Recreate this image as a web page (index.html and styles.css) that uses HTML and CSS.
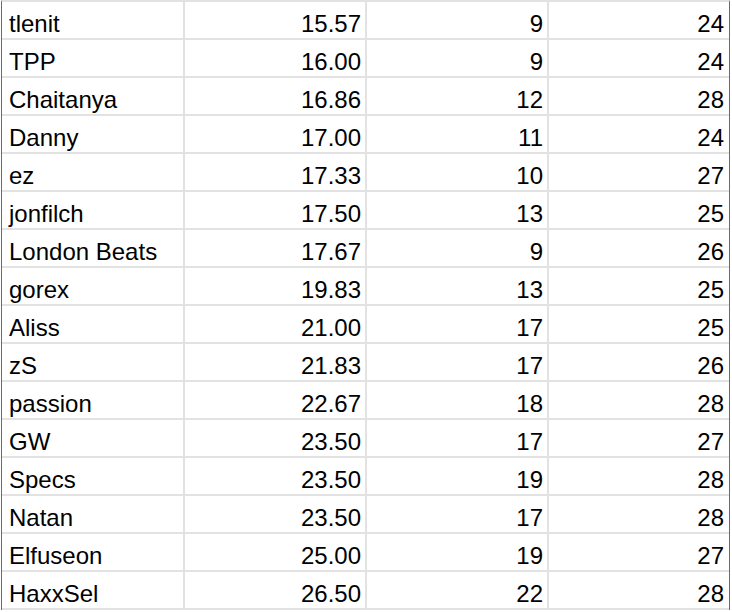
FILE: index.html
```html
<!DOCTYPE html>
<html>
<head>
<meta charset="utf-8">
<link rel="stylesheet" href="styles.css">
</head>
<body>
<div class="sheet">
  <div class="cell name">tlenit</div><div class="cell num">15.57</div><div class="cell num">9</div><div class="cell num last">24</div>
  <div class="cell name">TPP</div><div class="cell num">16.00</div><div class="cell num">9</div><div class="cell num last">24</div>
  <div class="cell name">Chaitanya</div><div class="cell num">16.86</div><div class="cell num">12</div><div class="cell num last">28</div>
  <div class="cell name">Danny</div><div class="cell num">17.00</div><div class="cell num">11</div><div class="cell num last">24</div>
  <div class="cell name">ez</div><div class="cell num">17.33</div><div class="cell num">10</div><div class="cell num last">27</div>
  <div class="cell name">jonfilch</div><div class="cell num">17.50</div><div class="cell num">13</div><div class="cell num last">25</div>
  <div class="cell name">London Beats</div><div class="cell num">17.67</div><div class="cell num">9</div><div class="cell num last">26</div>
  <div class="cell name">gorex</div><div class="cell num">19.83</div><div class="cell num">13</div><div class="cell num last">25</div>
  <div class="cell name">Aliss</div><div class="cell num">21.00</div><div class="cell num">17</div><div class="cell num last">25</div>
  <div class="cell name">zS</div><div class="cell num">21.83</div><div class="cell num">17</div><div class="cell num last">26</div>
  <div class="cell name">passion</div><div class="cell num">22.67</div><div class="cell num">18</div><div class="cell num last">28</div>
  <div class="cell name">GW</div><div class="cell num">23.50</div><div class="cell num">17</div><div class="cell num last">27</div>
  <div class="cell name">Specs</div><div class="cell num">23.50</div><div class="cell num">19</div><div class="cell num last">28</div>
  <div class="cell name">Natan</div><div class="cell num">23.50</div><div class="cell num">17</div><div class="cell num last">28</div>
  <div class="cell name">Elfuseon</div><div class="cell num">25.00</div><div class="cell num">19</div><div class="cell num last">27</div>
  <div class="cell name">HaxxSel</div><div class="cell num">26.50</div><div class="cell num">22</div><div class="cell num last">28</div>
</div>
</body>
</html>
```
FILE: styles.css
```css
html, body {
  margin: 0;
  padding: 0;
  background: #ffffff;
}

.sheet {
  margin-left: 1px;
  width: 727px;
  display: grid;
  grid-template-columns: 183px 182px 182px 180px;
  grid-auto-rows: 38px;
  border-left: 1px solid #3f8a43;
  border-right: 1px solid #3f8a43;
  border-top: 2px solid #e2e2e2;
  box-shadow: 0 1px 0 #3f8a43;
  font-family: "Liberation Sans", Arial, sans-serif;
  font-size: 24px;
  line-height: 24px;
  color: #000000;
}

.cell {
  display: flex;
  align-items: flex-end;
  border-right: 2px solid #e2e2e2;
  border-bottom: 2px solid #e2e2e2;
  padding-bottom: 2px;
  white-space: nowrap;
  overflow: hidden;
}

.cell.last {
  border-right: none;
}

.name {
  justify-content: flex-start;
  padding-left: 7px;
}

.num {
  justify-content: flex-end;
  padding-right: 4px;
}

.cell.last.num {
  padding-right: 5px;
}
```
